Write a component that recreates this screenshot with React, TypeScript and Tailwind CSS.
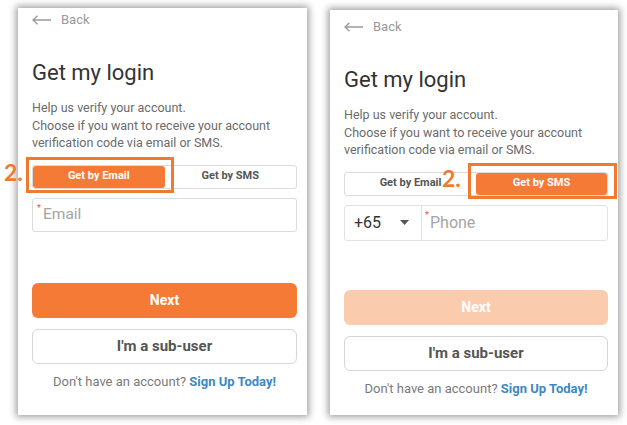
import React from 'react';

const BackArrow = () => (
  <svg width="19" height="10" viewBox="0 0 19 10" fill="none" stroke="#9a9a9a" strokeWidth="1.3">
    <path d="M1 5h18M5.5 0.8L1 5l4.5 4.2" />
  </svg>
);

const Caret = () => (
  <svg width="9" height="5" viewBox="0 0 9 5">
    <path d="M0 0h9L4.5 5z" fill="#555" />
  </svg>
);

type CardProps = { mode: 'email' | 'sms'; top: string; card: string };

const Card: React.FC<CardProps> = ({ mode, top, card }) => {
  const email = mode === 'email';
  return (
    <div className={`bg-white shadow-[0_0_7px_2px_rgba(0,0,0,0.38)] flex flex-col pl-[14px] pr-[10px] ${card} ${top}`}>
      <div className="flex items-center h-4 gap-[10px] text-[13px] text-[#9a9a9a]">
        <BackArrow />
        <span>Back</span>
      </div>
      <h1 className="mt-[31px] text-[22px] leading-[28px] text-[#333]">Get my login</h1>
      <p className="mt-[12px] text-[12.5px] leading-[17.5px] text-[#6b6b6b]">
        Help us verify your account.
        <br />
        Choose if you want to receive your account verification code via email or SMS.
      </p>
      <div className="mt-[13px] h-6 flex rounded-[3px] border border-[#dcdcdc] text-[11px] font-bold">
        <div className={`flex-1 flex items-center justify-center rounded-[3px] ${email ? 'bg-[#f47a36] text-white' : 'text-[#555]'}`}>
          Get by Email
        </div>
        <div className={`flex-1 flex items-center justify-center rounded-[3px] ${email ? 'text-[#555]' : 'bg-[#f47a36] text-white'}`}>
          Get by SMS
        </div>
      </div>
      {email ? (
        <div className="mt-[9px] h-[34px] rounded-[3px] border border-[#dcdcdc] flex items-center relative pl-[10px] text-[15.5px] text-[#a5a5a5]">
          <span className="absolute left-[4px] top-[3px] text-[9px] text-[#e0584a]">*</span>
          Email
        </div>
      ) : (
        <div className="mt-[9px] h-[36px] rounded-[3px] border border-[#e2e2e2] flex items-stretch">
          <div className="w-[77px] flex items-center justify-between pl-[9px] pr-[12px] text-[16px] text-[#333] border-r border-[#e2e2e2]">
            <span>+65</span>
            <Caret />
          </div>
          <div className="flex-1 flex items-center relative pl-[8px] text-[16px] text-[#a5a5a5]">
            <span className="absolute left-[3px] top-[3px] text-[9px] text-[#e0584a]">*</span>
            Phone
          </div>
        </div>
      )}
      <button className={`h-[35px] rounded-[6px] text-white text-[14px] font-bold ${email ? 'mt-[51px] bg-[#f47a36]' : 'mt-[49px] bg-[#fbcbae]'}`}>
        Next
      </button>
      <button className="mt-[11px] h-[35px] rounded-[6px] border border-[#d6d6d6] bg-white text-[#555] text-[15px] font-bold">
        I'm a sub-user
      </button>
      <p className="mt-[10px] text-center text-[13px] leading-4 text-[#7a7a7a]">
        Don't have an account? <span className="font-bold text-[#3d88c3]">Sign Up Today!</span>
      </p>
    </div>
  );
};

export default function App() {
  return (
    <div className="w-[627px] h-[425px] bg-white relative overflow-hidden flex items-start font-['Roboto',sans-serif]">
      <Card mode="email" card="ml-[18px] mt-[8px] w-[289px] h-[407px]" top="pt-[4px]" />
      <Card mode="sms" card="ml-[23px] mt-[10px] w-[288px] h-[405px]" top="pt-[9px]" />

      <div className="absolute left-[26px] top-[157px] w-[148px] h-[36px] border-[3px] border-[#ee7b30]" />
      <span className="absolute left-[4px] top-[159px] text-[23px] leading-[26px] font-bold text-[#ee7b30] font-['Lato',sans-serif]">2.</span>
      <div className="absolute left-[468px] top-[163px] w-[149px] h-[36px] border-[3px] border-[#ee7b30]" />
      <span className="absolute left-[442px] top-[165px] text-[23px] leading-[26px] font-bold text-[#ee7b30] font-['Lato',sans-serif]">2.</span>
    </div>
  );
}
